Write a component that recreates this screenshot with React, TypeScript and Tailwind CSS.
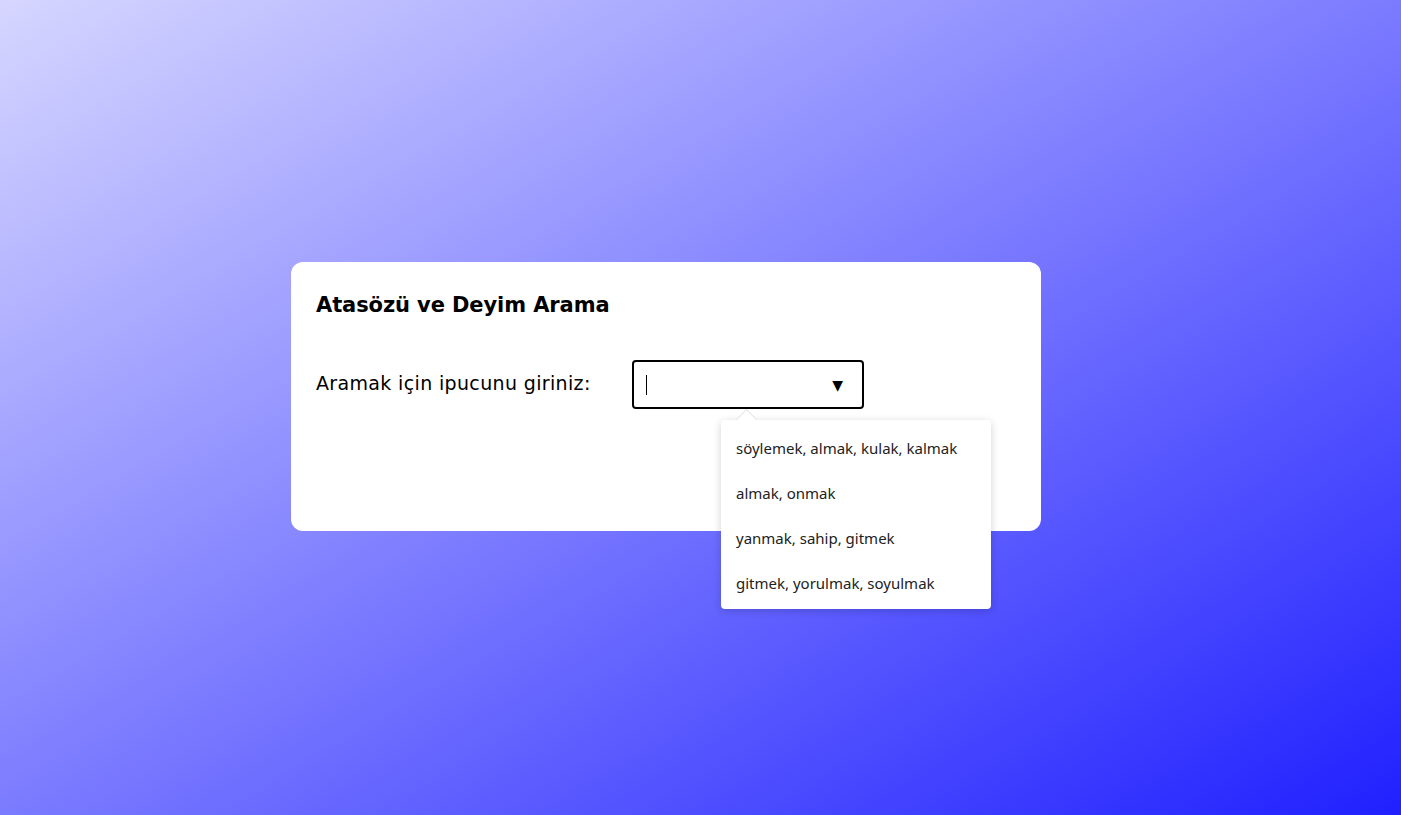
const OPTIONS = [
  'söylemek, almak, kulak, kalmak',
  'almak, onmak',
  'yanmak, sahip, gitmek',
  'gitmek, yorulmak, soyulmak',
];

export default function App() {
  return (
    <div className="flex min-h-[815px] w-full items-start justify-center bg-[linear-gradient(to_bottom_right,#d6d6ff,#2020ff)] pt-[262px]">
      <div className="ml-[-69px] h-[269px] w-[750px] rounded-xl bg-white px-[25px] pt-[28px] font-['DejaVu_Sans',sans-serif] text-black">
        <h1 className="text-[21px] font-semibold leading-[30px] tracking-[-0.1px]">Atasözü ve Deyim Arama</h1>
        <div className="mt-[40px] flex items-center">
          <label className="w-[316px] pb-[3px] text-[19px] leading-[24px] tracking-[0.35px]">Aramak için ipucunu giriniz:</label>
          <div className="relative">
            <div className="flex h-[49px] w-[232px] items-center justify-between rounded-[4px] border-2 border-black pl-[12px] pr-[19px]">
              <span className="h-[20px] w-px bg-black" />
              <span className="text-[14px] leading-none">▼</span>
            </div>
            <div className="absolute left-[89px] top-[60px] w-[270px] rounded-[4px] bg-white pb-[3px] pt-[6px] font-['Noto_Sans',sans-serif] text-[15px] text-[#222] shadow-[0_2px_8px_rgba(0,0,0,0.18)]">
              <div className="absolute left-[18px] top-[-8px] h-[15px] w-[15px] rotate-45 border-l border-t border-[#e2e2e2] bg-white" />
              {OPTIONS.map((o) => (
                <div key={o} className="relative flex h-[45px] items-center px-[15px]">
                  {o}
                </div>
              ))}
            </div>
          </div>
        </div>
      </div>
    </div>
  );
}
